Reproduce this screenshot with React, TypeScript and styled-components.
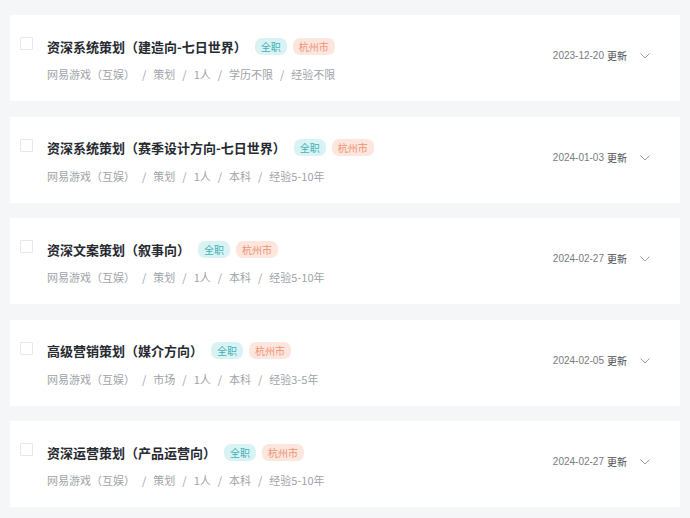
import React from "react";
import styled, { createGlobalStyle } from "styled-components";

const GlobalStyle = createGlobalStyle`
  html, body {
    margin: 0;
    padding: 0;
    background: #f4f6f8;
  }
  body {
    font-family: "Liberation Sans", "Noto Sans CJK SC", sans-serif;
  }
`;

const List = styled.div`
  width: 690px;
  padding: 15px 10px 0;
  box-sizing: border-box;
  display: flex;
  flex-direction: column;
  gap: 15.5px;
`;

const Card = styled.div`
  height: 86px;
  box-sizing: border-box;
  background: #fff;
  padding: 22px 30px 0 10px;
  display: flex;
  align-items: flex-start;
`;

const Check = styled.span`
  width: 11px;
  height: 11px;
  border: 1px solid #e6e8ea;
  border-radius: 1px;
  margin-right: 14px;
  flex-shrink: 0;
`;

const Info = styled.div`
  flex: 1;
  display: flex;
  flex-direction: column;
`;

const TitleRow = styled.div`
  height: 18px;
  display: flex;
  align-items: center;
`;

const Title = styled.span`
  font-size: 13px;
  font-weight: 700;
  color: #262a30;
  margin-right: 8px;
  font-family: "Noto Sans CJK SC", sans-serif;
`;

const Tag = styled.span<{ $tone: "teal" | "orange" }>`
  height: 17px;
  line-height: 17px;
  padding: 0 6px;
  border-radius: 7px;
  font-size: 10px;
  margin-right: 6px;
  font-family: "Noto Sans CJK SC", sans-serif;
  background: ${(p) => (p.$tone === "teal" ? "#d9f3f4" : "#fde6de")};
  color: ${(p) => (p.$tone === "teal" ? "#45b0b6" : "#ef9474")};
`;

const Sub = styled.div`
  margin-top: 11px;
  line-height: 16px;
  font-size: 11px;
  color: #a0a4a8;
  font-family: "Noto Sans CJK SC", sans-serif;
  display: flex;
  align-items: center;
`;

const Sep = styled.span`
  margin: 0 7px;
`;

const Meta = styled.div`
  margin-top: 12px;
  display: flex;
  align-items: center;
  font-size: 10px;
  color: #777b80;
  line-height: 14px;
`;

const Updated = styled.span`
  margin-left: 3px;
  color: #4a4e54;
  font-family: "Noto Sans CJK SC", sans-serif;
`;

const Chevron = styled.svg`
  margin-left: 13px;
  width: 10px;
  height: 6px;
`;

type Job = {
  title: string;
  dept: string;
  edu: string;
  exp: string;
  date: string;
};

const jobs: Job[] = [
  { title: "资深系统策划（建造向-七日世界）", dept: "策划", edu: "学历不限", exp: "经验不限", date: "2023-12-20" },
  { title: "资深系统策划（赛季设计方向-七日世界）", dept: "策划", edu: "本科", exp: "经验5-10年", date: "2024-01-03" },
  { title: "资深文案策划（叙事向）", dept: "策划", edu: "本科", exp: "经验5-10年", date: "2024-02-27" },
  { title: "高级营销策划（媒介方向）", dept: "市场", edu: "本科", exp: "经验3-5年", date: "2024-02-05" },
  { title: "资深运营策划（产品运营向）", dept: "策划", edu: "本科", exp: "经验5-10年", date: "2024-02-27" },
];

const JobCard = ({ job }: { job: Job }) => {
  const parts = [job.dept, "1人", job.edu, job.exp];
  return (
    <Card>
      <Check />
      <Info>
        <TitleRow>
          <Title>{job.title}</Title>
          <Tag $tone="teal">全职</Tag>
          <Tag $tone="orange">杭州市</Tag>
        </TitleRow>
        <Sub>
          <span>网易游戏（互娱）</span>
          {parts.map((p) => (
            <React.Fragment key={p}>
              <Sep>/</Sep>
              <span>{p}</span>
            </React.Fragment>
          ))}
        </Sub>
      </Info>
      <Meta>
        {job.date}
        <Updated>更新</Updated>
        <Chevron viewBox="0 0 10 6" fill="none">
          <path d="M0.5 0.5 L5 5 L9.5 0.5" stroke="#9a9ea4" strokeWidth="1" />
        </Chevron>
      </Meta>
    </Card>
  );
};

export default function App() {
  return (
    <>
      <GlobalStyle />
      <List>
        {jobs.map((j, i) => (
          <JobCard key={i} job={j} />
        ))}
      </List>
    </>
  );
}
